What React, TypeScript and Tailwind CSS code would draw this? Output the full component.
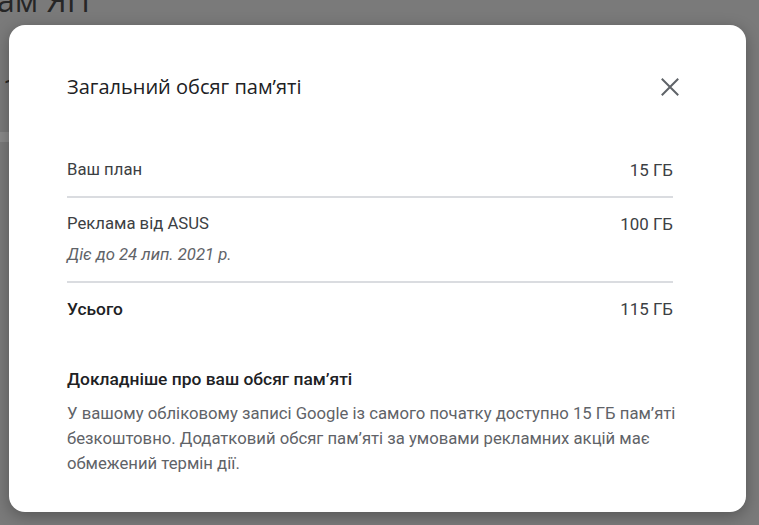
import React from "react";

function CloseIcon() {
  return (
    <svg width="18" height="18" viewBox="0 0 18 18" fill="none">
      <path d="M1.5 1.5L16.5 16.5M16.5 1.5L1.5 16.5" stroke="#5f6368" strokeWidth="2" strokeLinecap="square" />
    </svg>
  );
}

function Row({ label, value, sub, bold }: { label: string; value: string; sub?: string; bold?: boolean }) {
  return (
    <div className="flex items-start justify-between py-[14px]">
      <div className="flex flex-col">
        <span className={`leading-[24px] ${bold ? "text-[17.4px] font-medium text-[#202124]" : "text-[16.7px] text-[#3c4043]"}`}>{label}</span>
        {sub && <span className="mt-[7px] leading-[24px] text-[16.7px] italic text-[#5f6368]">{sub}</span>}
      </div>
      <span className="leading-[24px] text-[16.9px] text-[#3c4043]">{value}</span>
    </div>
  );
}

export default function App() {
  return (
    <div className="relative h-[525px] w-[759px] overflow-hidden bg-[#7a7a7a]" style={{ fontFamily: "Roboto, 'Noto Sans', sans-serif" }}>
      {/* faded page behind */}
      <div className="flex flex-col">
        <div className="-mt-[18px] -ml-[3px] text-[32px] leading-[36px] text-[#262626]" style={{ fontFamily: "'Open Sans', sans-serif" }}>ам ЯП</div>
        <div className="mt-[56px] -ml-[10px] text-[24px] leading-[28px] text-[#262626]">11</div>
        <div className="mt-[30px] h-[10px] w-[20px] bg-[#8a8a8a]" />
      </div>

      {/* dialog */}
      <div className="absolute left-[9px] top-[25px] flex h-[487px] w-[737px] flex-col rounded-[16px] bg-white pl-[58px] pr-[30px] pt-[50px] shadow-[0_4px_16px_rgba(0,0,0,0.3)]">
        <div className="flex items-center justify-between pr-[37px]">
          <h2 className="text-[20px] leading-[24px] text-[#202124]" style={{ fontFamily: "'Open Sans', sans-serif" }}>
            Загальний обсяг пам’яті
          </h2>
          <CloseIcon />
        </div>

        <div className="mt-[45px] mr-[43px] flex flex-col">
          <Row label="Ваш план" value="15 ГБ" />
          <div className="h-[2px] bg-[#dadce0]" />
          <Row label="Реклама від ASUS" value="100 ГБ" sub="Діє до 24 лип. 2021 р." />
          <div className="h-[2px] bg-[#dadce0]" />
          <Row label="Усього" value="115 ГБ" bold />
        </div>

        <div className="mt-[32px] flex flex-col">
          <h3 className="text-[17.4px] leading-[24px] font-medium text-[#202124]">Докладніше про ваш обсяг пам’яті</h3>
          <p className="mt-[10px] text-[16.7px] leading-[25px] text-[#5f6368]">
            У вашому обліковому записі Google із самого початку доступно 15 ГБ пам’яті безкоштовно. Додатковий обсяг пам’яті за умовами рекламних акцій має обмежений термін дії.
          </p>
        </div>
      </div>
    </div>
  );
}
